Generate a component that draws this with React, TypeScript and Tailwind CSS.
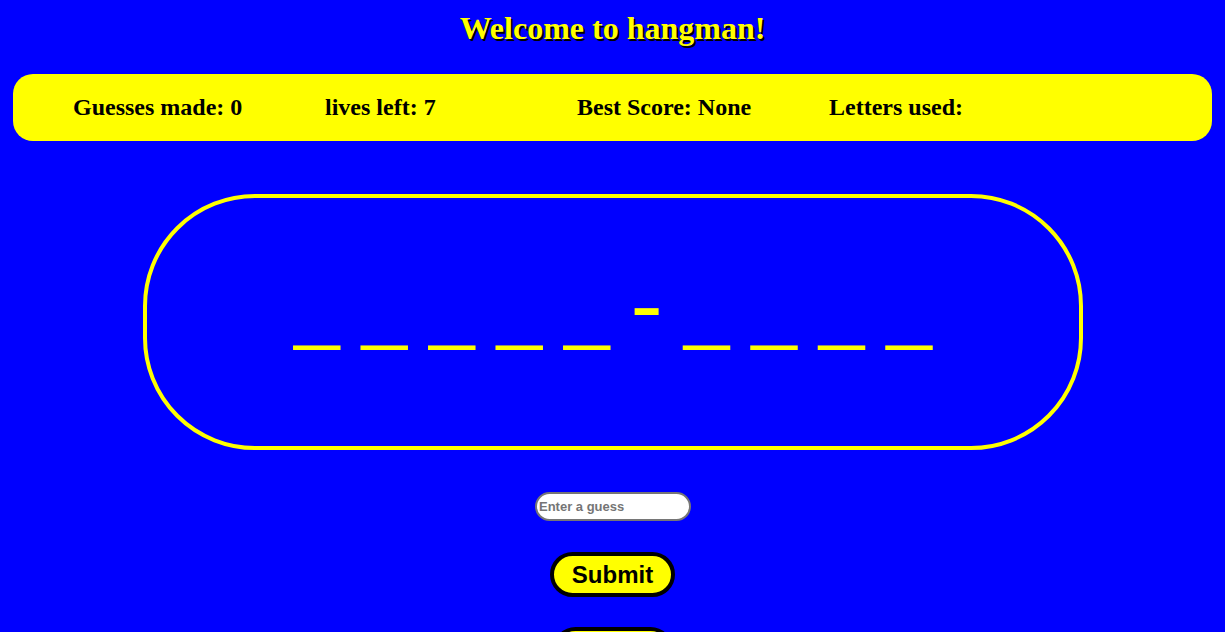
import React from "react";

export default function App() {
  return (
    <div className="min-h-[632px] bg-[#0000ff] overflow-hidden" style={{ fontFamily: '"Liberation Serif", serif' }}>
      <h1
        className="text-center text-[32px] font-bold text-[#ffff00] leading-[37px] pt-[10px]"
        style={{ textShadow: "2px 2px 0 #000" }}
      >
        Welcome to hangman!
      </h1>
      <div className="mx-[13px] mt-[27px] h-[67px] rounded-[20px] bg-[#ffff00] flex items-center pl-[60px] pb-[2px] text-[24px] font-bold text-black">
        <div className="w-[252px]">Guesses made: 0</div>
        <div className="w-[252px]">lives left: 7</div>
        <div className="w-[252px]">Best Score: None</div>
        <div className="w-[252px]">Letters used:</div>
      </div>
      <div className="mx-auto mt-[53px] w-[940px] h-[256px] rounded-[112px] border-4 border-[#ffff00] pt-[58px]">
        <div className="text-center text-[92px] leading-[92px] text-[#ffff00] whitespace-pre tracking-[-0.75px]">
          _ _ _ _ _ <span className="align-[5px]">-</span> _ _ _ _
        </div>
      </div>
      <div className="flex flex-col items-center mt-[42px]">
        <input
          type="text"
          placeholder="Enter a guess"
          className="ml-[1px] w-[156px] h-[29px] rounded-full border-2 border-[#767676] bg-white px-[2px] text-[13px] font-bold placeholder:text-[#757575] text-black outline-none"
          style={{ fontFamily: '"Liberation Sans", Arial, sans-serif' }}
        />
        <button
          className="mt-[31px] w-[125px] h-[45px] rounded-full border-4 border-black bg-[#ffff00] text-[24px] font-bold text-black"
          style={{ fontFamily: '"Liberation Sans", Arial, sans-serif' }}
        >
          Submit
        </button>
        <button
          className="mt-[30px] w-[120px] h-[45px] rounded-full border-4 border-black bg-[#ffff00] text-[24px] font-bold text-black"
          style={{ fontFamily: '"Liberation Sans", Arial, sans-serif' }}
        >
          Restart
        </button>
      </div>
    </div>
  );
}
